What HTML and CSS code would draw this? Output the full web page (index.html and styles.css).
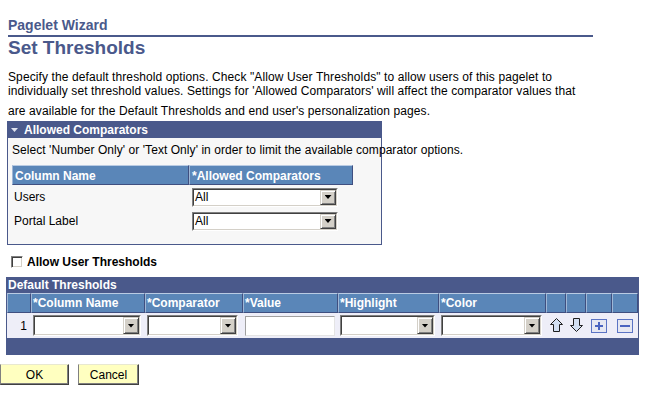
FILE: index.html
```html
<!DOCTYPE html>
<html lang="en">
<head>
  <meta charset="UTF-8">
  <title>Set Thresholds</title>
  <link rel="stylesheet" href="styles.css">
</head>
<body>

<div class="page">

  <div class="wizard">Pagelet Wizard</div>
  <h1 class="title">Set Thresholds</h1>

  <p class="intro">Specify the default threshold options. Check "Allow User Thresholds" to allow users of this pagelet to<br>individually set threshold values. Settings for 'Allowed Comparators' will affect the comparator values that</p>
  <p class="intro intro-last">are available for the Default Thresholds and end user's personalization pages.</p>

  <!-- Allowed Comparators group box -->
  <div class="groupbox">
    <div class="groupbox-label">
      <svg class="twisty" width="7" height="5" viewBox="0 0 7 5"><polygon points="0,0 7,0 3.5,4" fill="#dfe3ef"/></svg>
      Allowed Comparators
    </div>
    <div class="groupbox-body">
      <p class="hint">Select 'Number Only' or 'Text Only' in order to limit the available comparator options.</p>
      <div class="cmp-grid">
        <div class="head">Column Name</div>
        <div class="head">*Allowed Comparators</div>

        <div class="cell label">Users</div>
        <div class="cell pick"><div class="dd w146"><div class="dd-in"><span class="dd-text">All</span><span class="dd-btn"></span></div></div></div>

        <div class="cell label">Portal Label</div>
        <div class="cell pick"><div class="dd w146"><div class="dd-in"><span class="dd-text">All</span><span class="dd-btn"></span></div></div></div>
      </div>
    </div>
  </div>

  <label class="check-row"><span class="checkbox"></span>Allow User Thresholds</label>

  <!-- Default Thresholds grid -->
  <div class="grid">
    <div class="grid-label">Default Thresholds</div>
    <div class="grid-rows">
      <div class="ghead"></div>
      <div class="ghead">*Column Name</div>
      <div class="ghead">*Comparator</div>
      <div class="ghead">*Value</div>
      <div class="ghead">*Highlight</div>
      <div class="ghead">*Color</div>
      <div class="ghead"></div>
      <div class="ghead"></div>
      <div class="ghead"></div>
      <div class="ghead"></div>

      <div class="gcell num">1</div>
      <div class="gcell"><div class="dd w108 tall"><div class="dd-in"><span class="dd-text"></span><span class="dd-btn"></span></div></div></div>
      <div class="gcell"><div class="dd w91 tall"><div class="dd-in"><span class="dd-text"></span><span class="dd-btn"></span></div></div></div>
      <div class="gcell"><div class="txt"></div></div>
      <div class="gcell"><div class="dd w95 tall"><div class="dd-in"><span class="dd-text"></span><span class="dd-btn"></span></div></div></div>
      <div class="gcell"><div class="dd w101 tall"><div class="dd-in"><span class="dd-text"></span><span class="dd-btn"></span></div></div></div>
      <div class="gcell icon">
        <svg width="13" height="15" viewBox="0 0 13 15"><polygon points="6.5,0.5 12.5,6.5 9.5,6.5 9.5,13.5 3.5,13.5 3.5,6.5 0.5,6.5" fill="#d3e0f3" stroke="#1e1e1e"/></svg>
      </div>
      <div class="gcell icon">
        <svg width="13" height="15" viewBox="0 0 13 15"><polygon points="3.5,0.5 9.5,0.5 9.5,7.5 12.5,7.5 6.5,13.5 0.5,7.5 3.5,7.5" fill="#d3e0f3" stroke="#1e1e1e"/></svg>
      </div>
      <div class="gcell icon">
        <svg width="16" height="14" viewBox="0 0 16 14"><rect x="0.5" y="0.5" width="15" height="13" fill="#e6e8f2" stroke="#5b74c4"/><rect x="7" y="3" width="2" height="8" fill="#4a64c0"/><rect x="4" y="6" width="8" height="2" fill="#4a64c0"/></svg>
      </div>
      <div class="gcell icon">
        <svg width="16" height="14" viewBox="0 0 16 14"><rect x="0.5" y="0.5" width="15" height="13" fill="#e6e8f2" stroke="#5b74c4"/><rect x="3" y="6" width="10" height="2" fill="#4a64c0"/></svg>
      </div>
    </div>
    <div class="grid-foot"></div>
  </div>

  <div class="actions">
    <button class="btn btn-ok">OK</button>
    <button class="btn btn-cancel">Cancel</button>
  </div>

</div>

</body>
</html>
```

FILE: styles.css
```css
body {
  margin: 0;
  font-family: "Liberation Sans", Arial, sans-serif;
  font-size: 12px;
  color: #000;
  background: #fff;
}

.page {
  padding: 17px 0 0 8px;
}

.wizard {
  width: 585px;
  font-size: 14px;
  font-weight: bold;
  line-height: 16px;
  color: #4a598b;
  padding-bottom: 2px;
  border-bottom: 2px solid #4a598b;
}

.title {
  margin: 0;
  font-size: 19px;
  line-height: 22px;
  color: #4a598b;
}

.intro {
  margin: 11px 0 0;
  line-height: 14px;
  letter-spacing: 0.1px;
  white-space: nowrap;
}

.intro-last {
  margin-top: 6px;
}

/* group box */
.groupbox {
  box-sizing: border-box;
  width: 375px;
  margin: 3px 0 0 -1px;
  border: 1px solid #4a598b;
  background: #f7f7f7;
}

.groupbox-label {
  display: flex;
  align-items: center;
  height: 16px;
  padding-left: 3px;
  background: #4a598b;
  color: #fff;
  font-weight: bold;
  line-height: 16px;
}

.twisty {
  margin-right: 6px;
}

.groupbox-body {
  padding: 5px 0 11px 4px;
}

.hint {
  margin: 0;
  line-height: 14px;
  letter-spacing: 0.06px;
  white-space: nowrap;
}

.cmp-grid {
  display: grid;
  grid-template-columns: 177px 164px;
  grid-template-rows: 20px 24px 24px;
  margin-top: 8px;
}

.cmp-grid .head {
  box-sizing: border-box;
  height: 20px;
  padding: 3px 0 0 2px;
  line-height: 14px;
  background: #5a86b8;
  color: #fff;
  font-weight: bold;
  border-top: 1px solid #b9cbe3;
  border-left: 1px solid #9fb7d6;
  border-right: 1px solid #3f4f80;
  border-bottom: 1px solid #3f4f80;
}

.cmp-grid .cell {
  display: flex;
  align-items: center;
}

.cmp-grid .label {
  padding-left: 2px;
}

.cmp-grid .pick {
  padding-left: 3px;
}

/* drop-down box */
.dd {
  box-sizing: border-box;
  height: 19px;
  border: 1px solid;
  border-color: #808080 #fff #fff #808080;
}

.dd.tall {
  height: 21px;
}

.dd-in {
  display: flex;
  height: 100%;
  box-sizing: border-box;
  border: 1px solid;
  border-color: #404040 #d4d0c8 #d4d0c8 #404040;
  background: #fff;
}

.dd-text {
  flex: 1;
  padding-left: 1px;
  line-height: 15px;
}

.dd-btn {
  display: flex;
  align-items: center;
  justify-content: center;
  box-sizing: border-box;
  width: 16px;
  background: #d4d0c8;
  border: 1px solid;
  border-color: #d4d0c8 #404040 #404040 #d4d0c8;
  box-shadow: inset 1px 1px #fff, inset -1px -1px #808080;
}

.dd-btn::after {
  content: "";
  width: 7px;
  height: 4px;
  background: #000;
  clip-path: polygon(0 0, 100% 0, 50% 100%);
}

.w146 { width: 146px; }
.w108 { width: 108px; }
.w91 { width: 91px; }
.w95 { width: 95px; }
.w101 { width: 101px; }

.txt {
  box-sizing: border-box;
  width: 90px;
  height: 20px;
  background: #fff;
  border: 1px solid;
  border-color: #a0a0a0 #e4e4e4 #e4e4e4 #a0a0a0;
}

/* checkbox */
.check-row {
  display: flex;
  align-items: center;
  gap: 4px;
  margin: 10px 0 0 3px;
  line-height: 14px;
  font-weight: bold;
}

.checkbox {
  box-sizing: border-box;
  width: 12px;
  height: 12px;
  background: #fff;
  border: 1px solid;
  border-color: #808080 #fff #fff #808080;
  box-shadow: inset 1px 1px #404040, inset -1px -1px #d4d0c8;
}

/* grid */
.grid {
  box-sizing: border-box;
  width: 633px;
  margin: 8px 0 0 -2px;
  padding: 0 1px;
  background: #4a598b;
}

.grid-label {
  height: 16px;
  padding-left: 1px;
  line-height: 16px;
  color: #fff;
  font-weight: bold;
}

.grid-rows {
  display: grid;
  grid-template-columns: 24px 114px 98px 95px 101px 107px 20px 20px 26px 26px;
}

.ghead {
  box-sizing: border-box;
  height: 20px;
  padding: 2px 0 0 1px;
  line-height: 14px;
  background: #5a86b8;
  color: #fff;
  font-weight: bold;
  border-top: 1px solid #b9cbe3;
  border-left: 1px solid #9fb7d6;
  border-right: 1px solid #3f4f80;
  border-bottom: 1px solid #3f4f80;
}

.gcell {
  display: flex;
  align-items: center;
  height: 25px;
  padding-left: 2px;
  background: #eeeef8;
}

.gcell.num {
  justify-content: flex-end;
  padding: 0 4px 0 0;
}

.gcell.icon {
  justify-content: center;
  padding: 0;
}

.grid-foot {
  height: 17px;
}

/* buttons */
.actions {
  display: flex;
  gap: 9px;
  margin: 9px 0 0 -8px;
}

.btn {
  box-sizing: border-box;
  height: 21px;
  padding: 0;
  font-family: "Liberation Sans", Arial, sans-serif;
  font-size: 12px;
  color: #000;
  background: #ffffc0;
  border: 1px solid;
  border-color: #e8e8d0 #404040 #404040 #808080;
  box-shadow: inset -1px -1px #808080;
}

.btn-ok { width: 69px; }
.btn-cancel { width: 61px; }
```
